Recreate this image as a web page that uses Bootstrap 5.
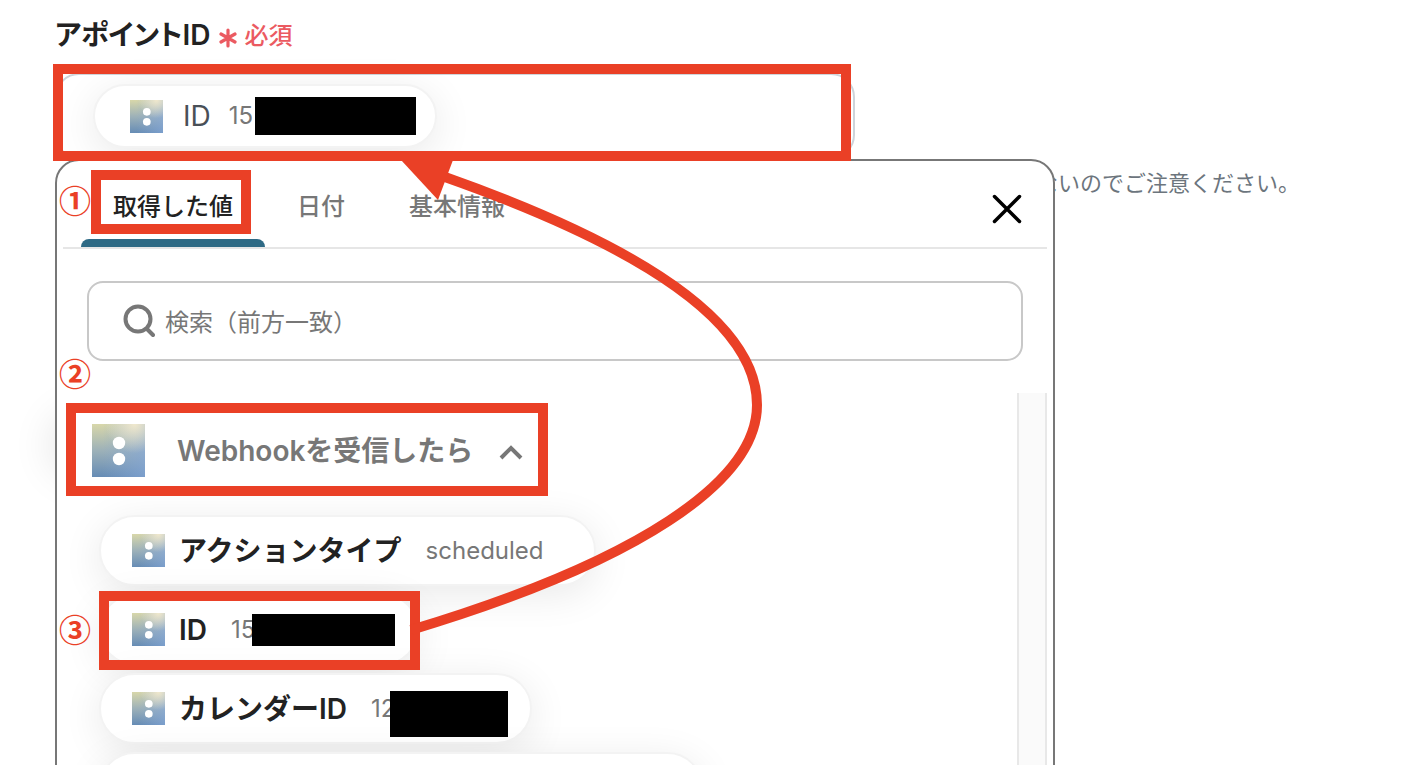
<!DOCTYPE html>
<html lang="ja">
<head>
<meta charset="utf-8">
<meta name="viewport" content="width=device-width, initial-scale=1">
<title>アポイントID</title>
<link href="https://cdn.jsdelivr.net/npm/bootstrap@5.3.0/dist/css/bootstrap.min.css" rel="stylesheet">
<style>
  :root { --mark: #ea4026; --ink: #222; --muted: #777; }
  body { font-family: Inter, "Noto Sans CJK JP", sans-serif; color: var(--ink); background: #fff; }
  .page { height: 100vh; padding: 16px 55px 0; }
  .field-label { font-size: 28px; line-height: 36px; font-weight: 600; font-feature-settings: "palt"; }
  .required { font-size: 24px; line-height: 36px; font-weight: 500; color: #eb5a61; gap: 8px; padding-top: 2px; }
  .field-box { width: 800px; height: 86px; margin-top: 19px; padding: 0 36px; border: 2px solid #ced4da; border-radius: 24px; }
  .help { font-size: 22px; line-height: 32px; color: #6c757d; margin: 8px 0 0 981px; }
  .chip { background: #fff; border: 2px solid #f3f3f3; border-radius: 36px; padding: 0 22px 0 31px; height: 71px; box-shadow: 0 8px 40px rgba(0,0,0,.09); font-size: 28px; font-weight: 600; color: var(--ink); width: fit-content; }
  .field-box .chip { height: 64px; padding: 0 19px 0 35px; font-weight: 400; color: #495057; }
  .chip-value { font-size: 24px; font-weight: 400; color: var(--muted); margin-left: 24px; }
  .field-box .chip-value { margin-left: 18px; }
  .app-icon { width: 33px; height: 33px; margin-right: 14px; flex: none; }
  .field-box .app-icon { margin-right: 20px; }
  .app-icon-lg { width: 53px; height: 53px; flex: none; }
  .redact { background: #000; flex: none; }
  .redact-a { width: 161px; height: 38px; margin-left: 2px; }
  .redact-b { width: 143px; height: 32px; margin-left: -3px; }
  .redact-c { width: 118px; height: 46px; margin: 10px 0 0 -5px; }
  .glow { position: absolute; left: 58px; top: 420px; width: 60px; height: 50px; border-radius: 30px; box-shadow: 0 0 40px 8px rgba(0,0,0,.1); }
  .picker { position: absolute; left: 55px; top: 159px; bottom: -32px; width: 1000px; background: #fff; border: 2px solid #777; border-radius: 24px; overflow: hidden; }
  .picker-tabs { height: 88px; margin: 0 6px; border-bottom: 2px solid #e6e6e6; }
  .picker-tabs button { border: 0; background: none; padding: 6px 32px 0; font-size: 24px; font-weight: 500; color: var(--muted); position: relative; }
  .picker-tabs .active { color: var(--ink); margin-left: 18px; }
  .picker-tabs .active::after { content: ""; position: absolute; left: 0; right: 0; bottom: 0; height: 8px; border-radius: 12px 12px 0 0; background: #2e6a85; }
  .picker-tabs .close-btn { margin-left: auto; padding: 8px 24px 0 0; }
  .search-box { height: 80px; margin: 32px 30px; border: 2px solid #c8c8c8; border-radius: 16px; padding: 0 34px; gap: 10px; }
  .search-box input { border: 0; outline: 0; background: none; font-size: 24px; color: var(--ink); padding: 4px 0 0; }
  .search-box input::placeholder { color: var(--muted); opacity: 1; }
  .scroll-area { margin-right: 6px; }
  .scroll-track { width: 30px; background: #fafafa; border: solid #e8e8e8; border-width: 0 2px; }
  .group-btn { border: 0; background: none; padding: 0; margin: 31px 0 38px 35px; color: var(--muted); font-size: 28px; font-weight: 600; }
  .chips { gap: 8px; padding-left: 42px; }
  .notes { position: absolute; left: 0; top: 0; pointer-events: none; }
  .notes text { fill: var(--mark); font: 700 32px "Noto Sans CJK JP", sans-serif; }
</style>
</head>
<body>
<svg width="0" height="0" class="position-absolute" aria-hidden="true">
  <defs>
    <linearGradient id="sky" x1="0" y1="0" x2="0" y2="1"><stop offset="0" stop-color="#d8d7aa"/><stop offset=".5" stop-color="#9db1b8"/><stop offset="1" stop-color="#668cb5"/></linearGradient>
    <linearGradient id="side" x1="0" y1="0" x2="1" y2="0"><stop offset=".2" stop-color="#86a8d8" stop-opacity="0"/><stop offset="1" stop-color="#86a8d8" stop-opacity=".65"/></linearGradient>
    <radialGradient id="sun" cx=".8" cy="0" r=".55"><stop offset="0" stop-color="#f0e8cd"/><stop offset="1" stop-color="#f0e8cd" stop-opacity="0"/></radialGradient>
    <symbol id="app" viewBox="0 0 53 53"><path fill="url(#sky)" d="M0 0h53v53H0z"/><path fill="url(#side)" d="M0 0h53v53H0z"/><path fill="url(#sun)" d="M0 0h53v53H0z"/><circle cx="27" cy="19" r="6.200" fill="#fff"/><circle cx="27" cy="35" r="6.200" fill="#fff"/></symbol>
  </defs>
</svg>
<main class="page position-relative overflow-hidden">
  <div class="d-flex align-items-center gap-2">
    <span class="field-label">アポイントID</span>
    <span class="required d-flex align-items-center">
      <svg width="18" height="20" viewBox="0 0 18 20" class="mt-1" fill="none" stroke="currentColor" stroke-width="3.200" stroke-linecap="round"><path d="M9 2v16M2 6l14 8M16 6L2 14"/></svg>必須</span>
  </div>
  <div class="field-box d-flex align-items-center">
    <div class="chip d-flex align-items-center"><svg class="app-icon"><use href="#app"/></svg><span>ID</span><span class="chip-value">15</span><span class="redact redact-a"></span></div>
  </div>
  <p class="help text-nowrap">ないのでご注意ください。</p>

  <div class="glow"></div>
  <section class="picker d-flex flex-column">
    <div class="picker-tabs d-flex flex-shrink-0" role="tablist">
      <button type="button" class="active" role="tab">取得した値</button>
      <button type="button" role="tab">日付</button>
      <button type="button" role="tab">基本情報</button>
      <button type="button" class="close-btn" aria-label="閉じる"><svg width="32" height="32" viewBox="0 0 32 32" fill="none" stroke="#000" stroke-width="3.500" stroke-linecap="round"><path d="M3.500 3.500l25 25M28.500 3.500l-25 25"/></svg></button>
    </div>
    <label class="search-box d-flex align-items-center flex-shrink-0">
      <svg width="32" height="34" viewBox="0 0 32 34" fill="none" stroke="#777" stroke-width="4" stroke-linecap="round"><circle cx="15" cy="15" r="12.500"/><path d="M24 25l6 6"/></svg>
      <input class="flex-grow-1" type="text" placeholder="検索（前方一致）" aria-label="検索">
    </label>
    <div class="scroll-area d-flex flex-grow-1 overflow-hidden">
      <div class="flex-grow-1">
        <button type="button" class="group-btn d-flex align-items-center" aria-expanded="true">
          <svg class="app-icon-lg"><use href="#app"/></svg><span class="ms-4 ps-2">Webhookを受信したら</span>
          <svg class="ms-4" width="28" height="20" viewBox="0 0 28 20" fill="none" stroke="currentColor" stroke-width="4"><path d="M4 17l10-10 10 10"/></svg>
        </button>
        <div class="chips d-flex flex-column">
          <div class="chip d-flex align-items-center flex-shrink-0"><svg class="app-icon"><use href="#app"/></svg><span>アクションタイプ</span><span class="chip-value pe-4 me-1">scheduled</span></div>
          <div class="chip d-flex align-items-center flex-shrink-0"><svg class="app-icon"><use href="#app"/></svg><span>ID</span><span class="chip-value">15</span><span class="redact redact-b"></span></div>
          <div class="chip d-flex align-items-center flex-shrink-0"><svg class="app-icon"><use href="#app"/></svg><span>カレンダーID</span><span class="chip-value">12</span><span class="redact redact-c"></span></div>
          <div class="chip me-auto" style="min-width:604px"></div>
        </div>
      </div>
      <div class="scroll-track"></div>
    </div>
  </section>

  <!-- Step marks and the arrow from the chosen value to the field -->
  <svg class="notes" width="1100" height="765" viewBox="0 0 1100 765" aria-label="手順">
    <g fill="none" stroke="#ea4026" stroke-width="10">
      <rect x="58" y="69" width="788" height="87"/>
      <rect x="96" y="175" width="150" height="54"/>
      <rect x="71" y="408" width="472" height="83"/>
      <rect x="104" y="596" width="311" height="69"/>
      <path d="M411 630C637 562 757 482 757 405C757 328 657 252 445 177"/>
    </g>
    <path fill="#ea4026" d="M401 160l37 40 15-40z"/>
    <text x="59" y="213">①</text><text x="59" y="386">②</text><text x="59" y="642">③</text>
  </svg>
</main>
<script src="https://cdn.jsdelivr.net/npm/bootstrap@5.3.0/dist/js/bootstrap.bundle.min.js"></script>
</body>
</html>
